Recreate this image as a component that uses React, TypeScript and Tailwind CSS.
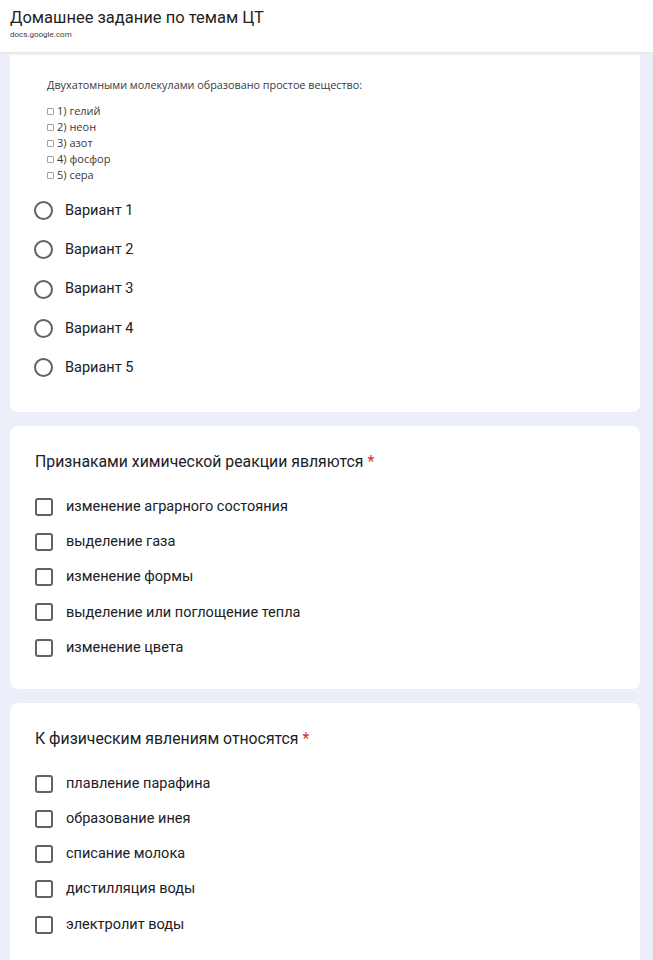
const imageItems = ["1) гелий", "2) неон", "3) азот", "4) фосфор", "5) сера"];

const variants = ["Вариант 1", "Вариант 2", "Вариант 3", "Вариант 4", "Вариант 5"];

const questions = [
  {
    title: "Признаками химической реакции являются",
    options: [
      "изменение аграрного состояния",
      "выделение газа",
      "изменение формы",
      "выделение или поглощение тепла",
      "изменение цвета",
    ],
  },
  {
    title: "К физическим явлениям относятся",
    options: [
      "плавление парафина",
      "образование инея",
      "списание молока",
      "дистилляция воды",
      "электролит воды",
    ],
  },
];

const App = () => {
  return (
    <div className="w-[653px] h-[960px] overflow-hidden bg-[#eceef9] font-['Roboto',sans-serif] text-[#202124]">
      {/* address bar */}
      <header className="h-[53px] bg-white border-b border-[#e6e6e6] pl-[10px] pt-[7px]">
        <h1 className="text-[16.5px] leading-[21px] text-[#1f1f1f]">Домашнее задание по темам ЦТ</h1>
        <p className="text-[8px] leading-[12px] text-[#3c3c3c] mt-[1px]">docs.google.com</p>
      </header>

      <main className="flex flex-col gap-[14px] px-[10px] pt-[2px]">
        {/* first card, top cut off */}
        <section className="bg-white rounded-b-[8px] pt-[22px] pb-[25px] w-[630px]">
          <div className="pl-[37px] font-['Open_Sans',sans-serif] text-[10.8px] leading-[16px] text-[#3a3a3a]">
            <p>Двухатомными молекулами образовано простое вещество:</p>
            <ul className="mt-[10px]">
              {imageItems.map((item) => (
                <li key={item} className="flex items-center gap-[3px]">
                  <span className="w-[7px] h-[7px] border border-[#a0a0a0] rounded-[1px]" />
                  <span className="text-[11px]">{item}</span>
                </li>
              ))}
            </ul>
          </div>
          <div className="mt-[8px] pl-[24px]">
            {variants.map((v) => (
              <label key={v} className="flex items-center h-[39.25px]">
                <span className="w-[19px] h-[19px] rounded-full border-2 border-[#5f6368]" />
                <span className="ml-[12px] text-[14.5px]">{v}</span>
              </label>
            ))}
          </div>
        </section>

        {questions.map((q) => (
          <section key={q.title} className="bg-white rounded-[8px] pt-[24px] pb-[24px] pl-[25px] w-[630px]">
            <h2 className="text-[15.8px] leading-[24px]">
              {q.title} <span className="text-[#d93025]">*</span>
            </h2>
            <div className="mt-[15px]">
              {q.options.map((o) => (
                <label key={o} className="flex items-center h-[35.2px]">
                  <span className="w-[18px] h-[18px] rounded-[3px] border-2 border-[#5f6368]" />
                  <span className="ml-[13px] text-[14.5px]">{o}</span>
                </label>
              ))}
            </div>
          </section>
        ))}
      </main>
    </div>
  );
};

export default App;
